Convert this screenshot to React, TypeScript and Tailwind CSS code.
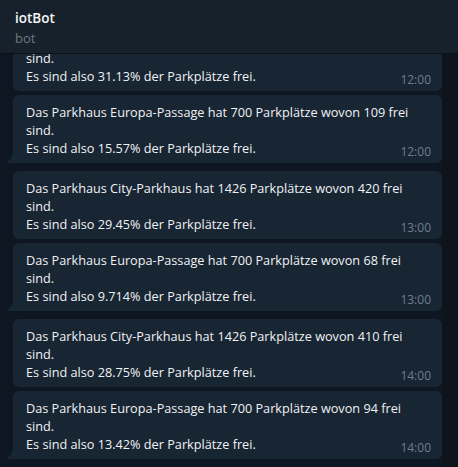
import React from 'react';

type Msg = { lines: string[]; time: string; tail?: boolean; gapBefore: number };

const messages: Msg[] = [
  { lines: ['Das Parkhaus City-Parkhaus hat 1426 Parkplätze wovon 440 frei', 'sind.', 'Es sind also 31.13% der Parkplätze frei.'], time: '12:00', gapBefore: 0 },
  { lines: ['Das Parkhaus Europa-Passage hat 700 Parkplätze wovon 109 frei', 'sind.', 'Es sind also 15.57% der Parkplätze frei.'], time: '12:00', tail: true, gapBefore: 4 },
  { lines: ['Das Parkhaus City-Parkhaus hat 1426 Parkplätze wovon 420 frei', 'sind.', 'Es sind also 29.45% der Parkplätze frei.'], time: '13:00', gapBefore: 8 },
  { lines: ['Das Parkhaus Europa-Passage hat 700 Parkplätze wovon 68 frei', 'sind.', 'Es sind also 9.714% der Parkplätze frei.'], time: '13:00', tail: true, gapBefore: 4 },
  { lines: ['Das Parkhaus City-Parkhaus hat 1426 Parkplätze wovon 410 frei', 'sind.', 'Es sind also 28.75% der Parkplätze frei.'], time: '14:00', gapBefore: 8 },
  { lines: ['Das Parkhaus Europa-Passage hat 700 Parkplätze wovon 94 frei', 'sind.', 'Es sind also 13.42% der Parkplätze frei.'], time: '14:00', tail: true, gapBefore: 4 },
];

function Bubble({ m }: { m: Msg }) {
  return (
    <div className="relative shrink-0" style={{ marginTop: m.gapBefore }}>
      <div className={`relative bg-[#182533] rounded-[6px] pl-[13px] pr-[11px] pt-[8px] pb-[6px] ${m.tail ? 'rounded-bl-none' : ''}`}>
        <div className="text-[12.7px] leading-[18px] text-[#f0f2f4] whitespace-nowrap">
          {m.lines.map((l, i) => (
            <div key={i}>{l}</div>
          ))}
        </div>
        <span className="absolute right-[11px] bottom-[3px] text-[12px] leading-[16px] text-[#6d7f8f]">{m.time}</span>
      </div>
      {m.tail && (
        <svg className="absolute bottom-0 left-[-6px]" width="6" height="12" viewBox="0 0 6 12">
          <path d="M6 0 V12 H0.5 C0 12 0 11.4 0.4 11 C3.5 8 6 5 6 0 Z" fill="#182533" />
        </svg>
      )}
    </div>
  );
}

export default function App() {
  return (
    <div className="h-[467px] w-[458px] flex flex-col overflow-hidden bg-[#0e1621]" style={{ fontFamily: '"Open Sans", "Noto Sans", sans-serif' }}>
      <div className="relative z-10 h-[54px] shrink-0 bg-[#17212b] border-b border-[#0b1016] px-[15px] pt-[8px]">
        <div className="text-[13.5px] font-semibold leading-[20px] text-[#f5f5f5]">iotBot</div>
        <div className="text-[13px] leading-[20px] text-[#6c7883]">bot</div>
      </div>
      <div className="flex-1 min-h-0 flex">
        <div className="flex-1 min-h-0 flex flex-col justify-end pl-[13px] pb-[8px] overflow-hidden">
          {messages.map((m, i) => (
            <Bubble key={i} m={m} />
          ))}
        </div>
        <div className="w-[16px] bg-[#0d141c]" />
      </div>
    </div>
  );
}
